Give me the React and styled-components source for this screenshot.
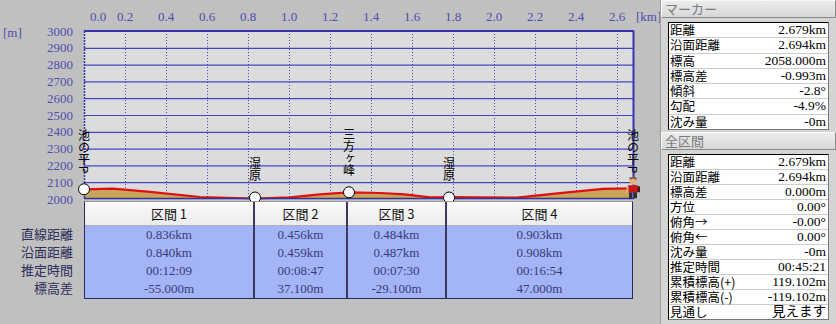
import React from "react";
import styled, { createGlobalStyle } from "styled-components";

const GlobalStyle = createGlobalStyle`
  html, body {
    margin: 0;
    padding: 0;
    background: #c0c0c0;
  }
  body {
    width: 836px;
    height: 324px;
    overflow: hidden;
    font-family: "Noto Sans CJK JP", sans-serif;
  }
`;

const SERIF = `"Liberation Serif", "Noto Sans CJK JP", serif`;

// chart geometry
const X0 = 84;
const PX_PER_KM = 205;
const Y_TOP = 31;
const Y_BOTTOM = 199;
const PX_PER_M = (Y_BOTTOM - Y_TOP) / 1000;

const kmToX = (km) => X0 + km * PX_PER_KM;
const mToY = (m) => Y_BOTTOM - (m - 2000) * PX_PER_M;

const profile = [
  [84, 2058], [113, 2062], [150, 2042], [200, 2012], [255, 2003],
  [290, 2010], [320, 2028], [349, 2040], [380, 2036], [405, 2028],
  [430, 2010], [449, 2011], [517, 2008], [560, 2035], [603, 2060], [633, 2063],
];

const places = [
  { x: 84, m: 2058, name: "池の平P" },
  { x: 255, m: 2003, name: "湿原" },
  { x: 349, m: 2040, name: "三方ヶ峰" },
  { x: 449, m: 2003, name: "湿原" },
  { x: 633, m: 2058, name: "池の平P", marker: true },
];

const sections = [
  { w: 168, name: "区間 1", vals: ["0.836km", "0.840km", "00:12:09", "-55.000m"] },
  { w: 91, name: "区間 2", vals: ["0.456km", "0.459km", "00:08:47", "37.100m"] },
  { w: 97, name: "区間 3", vals: ["0.484km", "0.487km", "00:07:30", "-29.100m"] },
  { w: 185, name: "区間 4", vals: ["0.903km", "0.908km", "00:16:54", "47.000m"] },
];

const rowLabels = ["直線距離", "沿面距離", "推定時間", "標高差"];

const marker = [
  ["距離", "2.679km"],
  ["沿面距離", "2.694km"],
  ["標高", "2058.000m"],
  ["標高差", "-0.993m"],
  ["傾斜", "-2.8°"],
  ["勾配", "-4.9%"],
  ["沈み量", "-0m"],
];

const total = [
  ["距離", "2.679km"],
  ["沿面距離", "2.694km"],
  ["標高差", "0.000m"],
  ["方位", "0.00°"],
  ["俯角→", "-0.00°"],
  ["俯角←", "0.00°"],
  ["沈み量", "-0m"],
  ["推定時間", "00:45:21"],
  ["累積標高(+)", "119.102m"],
  ["累積標高(-)", "-119.102m"],
  ["見通し", "見えます"],
];

const Screen = styled.div`
  display: flex;
  width: 836px;
  height: 324px;
`;

const LeftColumn = styled.div`
  width: 660px;
  display: flex;
  flex-direction: column;
`;

const ChartSvg = styled.svg`
  display: block;
  overflow: visible;
`;

const SectionTable = styled.div`
  display: flex;
  margin-top: 2px;
`;

const RowLabels = styled.div`
  width: 84px;
  padding-top: 24px;
  display: flex;
  flex-direction: column;
`;

const RowLabel = styled.div`
  height: 18px;
  line-height: 18px;
  padding-right: 11px;
  text-align: right;
  font-size: 13px;
  color: #2e2e5a;
`;

const SectionGrid = styled.div`
  display: flex;
  gap: 2px;
  background: #3a3a5e;
  border: 1px solid #2c2c58;
  border-top: 1px solid #9a9a9a;
`;

const SectionCol = styled.div`
  width: ${(p) => p.$w}px;
  display: flex;
  flex-direction: column;
`;

const SectionHead = styled.div`
  height: 23px;
  line-height: 23px;
  text-align: center;
  font-size: 13px;
  color: #111;
  background: linear-gradient(#fafafa, #ececec);
  border-bottom: 1px solid #b0b0b0;
`;

const SectionValue = styled.div`
  height: 18px;
  line-height: 18px;
  text-align: center;
  font-family: ${SERIF};
  font-size: 13px;
  color: #3a3a78;
  background: #a3b5f7;
`;

const Panel = styled.div`
  width: 176px;
  background: #d4d4d4;
  border-left: 1px solid #9c9c9c;
  display: flex;
  flex-direction: column;
`;

const PanelHeader = styled.div`
  height: 16px;
  line-height: 16px;
  margin-top: ${(p) => p.$top}px;
  padding-left: 3px;
  font-size: 13px;
  color: #7a7a7a;
  background: linear-gradient(#ececec, #d8d8d8);
  border-top: 1px solid #fafafa;
  border-left: 1px solid #fafafa;
  border-bottom: 1px solid #8a8a8a;
  border-right: 1px solid #8a8a8a;
`;

const InfoBox = styled.div`
  margin: ${(p) => p.$top}px 7px 0 7px;
  background: #fff;
  border: 1px solid #000;
  border-right-color: #777;
  border-bottom-color: #777;
`;

const InfoRow = styled.div`
  display: flex;
  justify-content: space-between;
  align-items: center;
  height: ${(p) => p.$h}px;
  line-height: ${(p) => p.$h}px;
  padding: 0 2px 0 1px;
  border-bottom: 1px solid #cccccc;
  &:last-child {
    border-bottom: none;
  }
`;

const InfoLabel = styled.span`
  font-size: 12.5px;
  line-height: inherit;
  color: #000;
`;

const InfoValue = styled.span`
  font-family: ${SERIF};
  font-size: 13.5px;
  line-height: inherit;
  color: #000;
`;

function Hiker({ x, y }) {
  return (
    <g>
      <rect x={x - 3.5} y={y - 21} width={7} height={2.5} fill="#8a5a2a" />
      <circle cx={x} cy={y - 16.5} r={3} fill="#e8b080" />
      <rect x={x - 5} y={y - 13} width={10} height={7} fill="#c81818" />
      <rect x={x - 6.5} y={y - 12} width={2} height={6} fill="#e8b080" />
      <rect x={x + 4.5} y={y - 12} width={2.5} height={6} fill="#402020" />
      <rect x={x - 4} y={y - 6} width={3} height={6} fill="#303030" />
      <rect x={x + 1} y={y - 6} width={3} height={6} fill="#303030" />
    </g>
  );
}

function Chart() {
  const gridBlue = "#4646c4";
  const labelBlue = "#4e4eae";
  const line = profile.map(([x, m]) => `${x},${mToY(m).toFixed(1)}`).join(" ");
  const area = `${X0},${Y_BOTTOM} ${line} 633,${Y_BOTTOM}`;

  return (
    <ChartSvg width="660" height="199" viewBox="0 0 660 199">
      <rect x={X0} y={Y_TOP} width={549} height={Y_BOTTOM - Y_TOP} fill="#dcdcdc" />

      {Array.from({ length: 14 }, (_, k) => {
        const x = kmToX(k * 0.2);
        return (
          <g key={k}>
            {k > 0 && (
              <line x1={x + 0.5} y1={Y_TOP} x2={x + 0.5} y2={Y_BOTTOM} stroke={gridBlue} strokeDasharray="1 2" />
            )}
            <text
              x={k === 0 ? 98 : x}
              y={21}
              textAnchor="middle"
              fontFamily="Liberation Serif"
              fontSize="13"
              fill={labelBlue}
            >
              {(k * 0.2).toFixed(1)}
            </text>
          </g>
        );
      })}
      <text x={636} y={21} fontFamily="Liberation Serif" fontSize="13" fill={labelBlue}>[km]</text>
      <text x={3} y={37} fontFamily="Liberation Serif" fontSize="13" fill={labelBlue}>[m]</text>

      {Array.from({ length: 11 }, (_, i) => {
        const y = Y_TOP + i * 16.8;
        return (
          <g key={i}>
            {i > 0 && i < 10 && (
              <line x1={X0} y1={y + 0.5} x2={633} y2={y + 0.5} stroke={gridBlue} strokeWidth="1.2" />
            )}
            <text
              x={73}
              y={y + 4.5}
              textAnchor="end"
              fontFamily="Liberation Serif"
              fontSize="13"
              fill={labelBlue}
            >
              {3000 - i * 100}
            </text>
          </g>
        );
      })}

      <polygon points={area} fill="#c9a55c" />
      <polyline points={line} fill="none" stroke="#e01010" strokeWidth="2.2" />

      <line x1={X0} y1={Y_TOP} x2={634} y2={Y_TOP} stroke="#3434b0" strokeWidth="2" />
      <line x1={633.5} y1={Y_TOP} x2={633.5} y2={Y_BOTTOM} stroke="#3434b0" strokeWidth="2" />
      <line x1={X0 + 0.5} y1={Y_TOP} x2={X0 + 0.5} y2={Y_BOTTOM} stroke="#3434b0" strokeWidth="1.5" strokeDasharray="2 1" />
      <line x1={X0} y1={Y_BOTTOM - 0.5} x2={634} y2={Y_BOTTOM - 0.5} stroke="#3434a0" strokeWidth="1.5" />

      {places.map((p, i) => {
        const cy = Math.min(mToY(p.m), 197.5);
        return (
          <g key={i}>
            <text
              x={p.x}
              y={cy - 16}
              textAnchor="end"
              fontFamily="Noto Sans CJK JP"
              fontSize="12"
              fill="#000"
              style={{ writingMode: "vertical-rl" }}
            >
              {p.name}
            </text>
            {p.marker ? (
              <Hiker x={p.x} y={cy + 9} />
            ) : (
              <circle cx={p.x} cy={cy} r={5.5} fill="#fff" stroke="#000" strokeWidth="1" />
            )}
          </g>
        );
      })}
    </ChartSvg>
  );
}

export default function App() {
  return (
    <>
      <GlobalStyle />
      <Screen>
        <LeftColumn>
          <Chart />
          <SectionTable>
            <RowLabels>
              {rowLabels.map((l) => (
                <RowLabel key={l}>{l}</RowLabel>
              ))}
            </RowLabels>
            <SectionGrid>
              {sections.map((s) => (
                <SectionCol key={s.name} $w={s.w}>
                  <SectionHead>{s.name}</SectionHead>
                  {s.vals.map((v, i) => (
                    <SectionValue key={i}>{v}</SectionValue>
                  ))}
                </SectionCol>
              ))}
            </SectionGrid>
          </SectionTable>
        </LeftColumn>

        <Panel>
          <PanelHeader $top={0}>マーカー</PanelHeader>
          <InfoBox $top={4}>
            {marker.map(([k, v]) => (
              <InfoRow key={k} $h={14.3}>
                <InfoLabel>{k}</InfoLabel>
                <InfoValue>{v}</InfoValue>
              </InfoRow>
            ))}
          </InfoBox>
          <PanelHeader $top={2}>全区間</PanelHeader>
          <InfoBox $top={4}>
            {total.map(([k, v]) => (
              <InfoRow key={k} $h={14}>
                <InfoLabel>{k}</InfoLabel>
                <InfoValue>{v}</InfoValue>
              </InfoRow>
            ))}
          </InfoBox>
        </Panel>
      </Screen>
    </>
  );
}
